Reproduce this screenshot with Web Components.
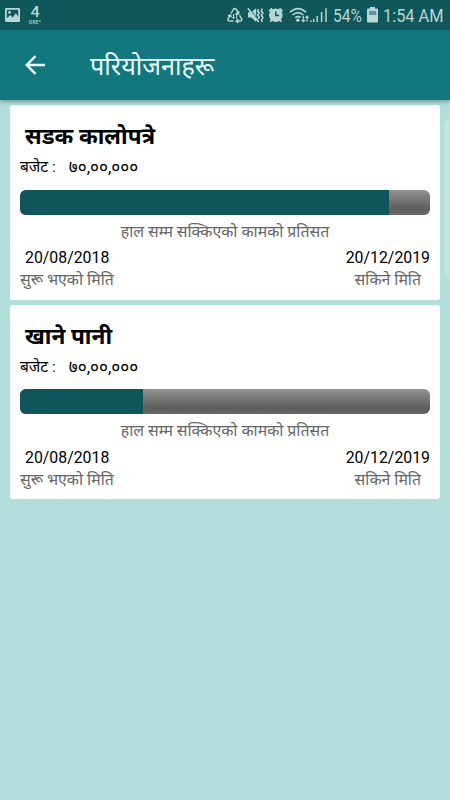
<!DOCTYPE html>
<html lang="ne">
<head>
<meta charset="utf-8">
<meta name="viewport" content="width=device-width">
<title>परियोजनाहरू</title>
<style>
html,body{margin:0;height:100%;overflow:hidden}
body{background:#b2dfdb;font-family:Roboto,"Noto Sans","Noto Sans Devanagari",sans-serif}
</style>
</head>
<body>
<projects-screen>
  <status-bar slot="status" battery="54%" time="1:54 AM"></status-bar>
  <app-bar slot="bar">परियोजनाहरू</app-bar>
  <project-card budget="७०,००,०००" progress="90" start="20/08/2018" end="20/12/2019">सडक कालोपत्रे</project-card>
  <project-card budget="७०,००,०००" progress="30" start="20/08/2018" end="20/12/2019">खाने पानी</project-card>
</projects-screen>
<script>
const define = (name, html, setup) => customElements.define(name, class extends HTMLElement {
  constructor() {
    super();
    this.attachShadow({ mode: 'open' }).innerHTML = html;
  }
  connectedCallback() { if (setup) setup(this, this.shadowRoot); }
});

define('projects-screen', `
<style>
:host{display:flex;flex-direction:column;height:800px;width:450px;position:relative;overflow:hidden;background:#b2dfdb}
main{display:flex;flex-direction:column;gap:5px;padding:5px 10px}
.edge{position:absolute;left:445px;top:119px;width:12px;height:157px;border:1px solid #c9e9e6;border-radius:6px;background:#bfe4e1}
</style>
<slot name="status"></slot><slot name="bar"></slot>
<main><slot></slot></main>
<div class="edge"></div>`);

define('status-bar', `
<style>
:host{display:flex;align-items:center;height:30px;background:#10575c;color:#b9d6d7;z-index:2;flex:none}
svg{display:block;flex:none}
.net{margin-left:8px;width:14px;display:flex;flex-direction:column;align-items:center}
.net b{font:500 14px/13px Roboto;transform:scaleX(1.15)}
.net i{font:500 5px/5px Roboto;letter-spacing:.2px;margin-top:1px}
.space{flex:1}
.t{font-size:19px;line-height:30px;white-space:nowrap;transform-origin:0 50%;padding-top:1px}
.pct{width:30px;transform:scaleX(.82)}
.time{width:67px;transform:scaleX(.86)}
</style>
<svg style="margin-left:5px" width="15" height="30" viewBox="0 0 15 30"><path fill="currentColor" fill-rule="evenodd" d="M1 8h13a1 1 0 0 1 1 1v12a1 1 0 0 1-1 1H1a1 1 0 0 1-1-1V9a1 1 0 0 1 1-1zM1.800 9.800v8.500l3.500-3.400 2.400 2.600 3-4.200 2.500 3.200V9.800zM4.500 11a1.400 1.400 0 1 1 0 2.800 1.400 1.400 0 0 1 0-2.800z"/></svg>
<div class="net"><b>4</b><i>ORE*</i></div>
<div class="space"></div>
<svg width="110" height="30" viewBox="220 0 110 30" fill="none" stroke="currentColor" stroke-width="1.500">
  <path stroke-width="1.500" d="M231 13.500l2.300-4q1.500-1.900 3 0l2.200 3.800m.3-2.200-.2 2.700-2.700-.6M239.500 15.300l2 3.400q.8 2-1.300 2.400h-4m2-2-2 2 2 1.800M233.500 21.100h-4q-2.300-.4-1.300-2.400l2.100-3.700m-2.300.7 2.400-.8 1.100 2.300"/>
  <path d="M233.600 13.800v4.700m-1.300-1.300 1.300 1.300 1.300-1.300M236.600 18.500v-4.700m-1.300 1.300 1.300-1.300 1.300 1.300" stroke-width="1"/>
  <path fill="currentColor" stroke="none" d="M248 12.300h3.200l5-4.300v14l-5-4.500H248z"/>
  <path d="M249 8.500l9.500 11.800" stroke="#10575c" stroke-width="1.200"/><path d="M247.800 8.200l11 13.800" stroke-width="1.500"/>
  <path stroke-width="1.600" d="M258.700 9l-1 2 1.500 2-1.500 2 1.500 2-1 2M262.300 8.500l-1 2.300 1.500 2.200-1.500 2.200 1.500 2.300-1.300 2.500.8 2"/>
  <circle cx="275.800" cy="15.300" r="6.700" fill="currentColor" stroke="none"/>
  <path stroke-width="2" d="M269.200 11.200l3-2.700m10.200 2.700-3-2.700M271.500 20l-1.200 1.800m9.800-1.800 1.200 1.800"/>
  <path d="M275.800 11.500v4h3.300" stroke="#10575c" stroke-width="1.500"/>
  <path stroke-width="1.600" d="M290 12.200q8-7.300 16 0M292.600 15q5.400-4.700 10.800 0M295.200 17.700q2.800-2.200 5.400 0"/>
  <circle cx="297.800" cy="20.200" r="1.700" fill="currentColor" stroke="none"/>
  <path stroke-width="1.200" d="M303.300 16v5.500m-1.700-1.700 1.700 1.800 1.700-1.800M307 21.700V16m-1.700 1.800 1.700-1.800 1.700 1.800"/>
  <path stroke-width="1.500" d="M313.700 22v-3M317.200 22v-6M321.600 22v-10M326 22V8.200M311 22v-1.500"/>
</svg>
<div class="t pct" style="margin-left:3px"></div>
<svg style="margin-left:4px" width="12" height="30" viewBox="0 0 12 30"><path fill="currentColor" d="M3 7h5v1.500h2q1 0 1 1v12q0 1-1 1H1q-1 0-1-1v-12q0-1 1-1h2z"/><path fill="#5f9395" d="M2 11h7.200v4H2z"/></svg>
<div class="t time" style="margin-left:4px"></div>`,
(el, r) => {
  r.querySelector('.pct').textContent = el.getAttribute('battery');
  r.querySelector('.time').textContent = el.getAttribute('time');
});

define('app-bar', `
<style>
:host{display:flex;align-items:center;height:70px;background:#12777f;color:#eefafa;z-index:1;flex:none;box-shadow:0 1px 5px rgba(0,50,55,.5)}
svg{margin-left:25px;flex:none}
h1{margin:4px 0 0 45px;font-size:25.2px;font-weight:400;line-height:40px;white-space:nowrap}
</style>
<svg width="20" height="20" viewBox="0 0 20 20" fill="none" stroke="currentColor" stroke-width="2.400"><path d="M20 10H2M10.500 1.200 1.700 10l8.800 8.800"/></svg>
<h1><slot></slot></h1>`);

define('progress-bar', `
<style>
:host{display:block;height:25px;border-radius:6px;overflow:hidden;background:linear-gradient(#929492,#5c5e5c 75%,#686a68)}
div{height:100%;background:#10555b}
</style><div></div>`,
(el, r) => { r.querySelector('div').style.width = el.getAttribute('value') + '%'; });

define('project-card', `
<style>
:host{display:flex;flex-direction:column;box-sizing:border-box;height:194.5px;padding:0 10px;background:#fff;border-radius:3px;color:#000;font-size:15.85px;white-space:nowrap}
h2{margin:15px 0 0 5px;font-size:22.6px;line-height:34px;font-weight:700}
.budget{display:flex;gap:13px;line-height:24px;height:24px;font-size:15.5px;margin-top:1px}
.amount{font-size:17.2px}
progress-bar{margin-top:10.500px;flex:none}
.caption{height:24px;line-height:24px;margin-top:5px;text-align:center;color:#666}
.row{display:flex;justify-content:space-between;height:22px;line-height:22px}
.dates{padding-left:5px;margin-top:3.900px}
.labels{color:#666;padding-right:9px}
</style>
<h2><slot></slot></h2>
<div class="budget"><span>बजेट :</span><span class="amount"></span></div>
<progress-bar></progress-bar>
<div class="caption">हाल सम्म सक्किएको कामको प्रतिसत</div>
<div class="row dates"><span class="start"></span><span class="end"></span></div>
<div class="row labels"><span>सुरू भएको मिति</span><span>सकिने मिति</span></div>`,
(el, r) => {
  r.querySelector('.amount').textContent = el.getAttribute('budget');
  r.querySelector('.start').textContent = el.getAttribute('start');
  r.querySelector('.end').textContent = el.getAttribute('end');
  const bar = r.querySelector('progress-bar');
  bar.setAttribute('value', el.getAttribute('progress'));
  bar.shadowRoot.querySelector('div').style.width = el.getAttribute('progress') + '%';
});
</script>
</body>
</html>
